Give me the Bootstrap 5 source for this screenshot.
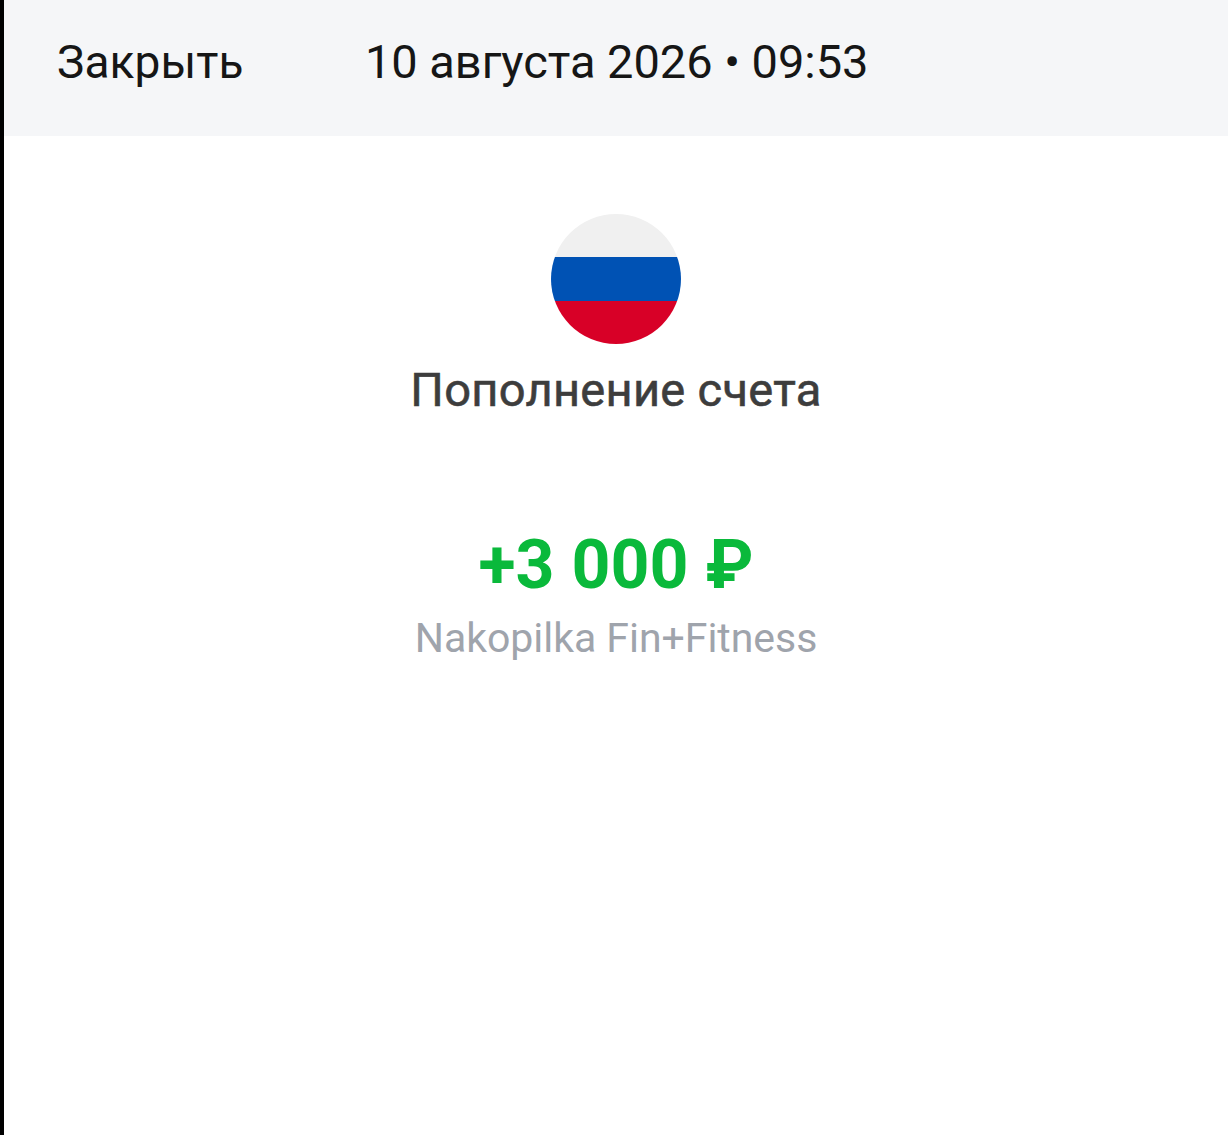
<!DOCTYPE html>
<html lang="ru"><head><meta charset="utf-8">
<link rel="stylesheet" href="https://cdn.jsdelivr.net/npm/bootstrap@5.3.0/dist/css/bootstrap.min.css">
<style>
html,body{height:100%;background:#fff;}
body{font-family:Roboto,"Noto Sans",sans-serif;}
.page-frame{height:1135px;border-left:4px solid #000;overflow:hidden;}
.top-strip{height:136px;background:#f5f6f8;color:#161616;padding-left:53px;padding-bottom:12px;}
.close-label{font-size:46px;width:308px;letter-spacing:.1px;}
.date-label{font-size:47px;letter-spacing:-.05px;}
.flag-disc{width:130px;height:130px;margin-top:78px;}
.op-title{font-size:47px;font-weight:400;color:#3d3d3d;line-height:60px;margin-top:16px;letter-spacing:.3px;-webkit-text-stroke:.6px #3d3d3d;}
.op-amount{font-size:68px;font-weight:700;color:#0ab93b;line-height:72px;margin-top:109px;}
.op-sub{font-size:41px;color:#9fa4ac;line-height:50px;margin-top:12px;letter-spacing:-.03px;}
</style></head><body>
<div class="page-frame d-flex flex-column">
<div class="top-strip d-flex align-items-center"><span class="close-label">Закрыть</span><span class="date-label">10 августа 2026 • 09:53</span></div>
<div class="d-flex flex-column align-items-center text-center">
<svg class="flag-disc" viewBox="0 0 130 130"><defs><clipPath id="c"><circle cx="65" cy="65" r="65"/></clipPath></defs><g clip-path="url(#c)"><rect width="130" height="43" fill="#f0f0f0"/><rect y="43" width="130" height="44" fill="#0052b4"/><rect y="87" width="130" height="43" fill="#d80027"/></g></svg>
<div class="op-title">Пополнение счета</div>
<div class="op-amount">+3 000 ₽</div>
<div class="op-sub">Nakopilka Fin+Fitness</div>
</div>
</div>
<script src="https://cdn.jsdelivr.net/npm/bootstrap@5.3.0/dist/js/bootstrap.bundle.min.js"></script>
</body></html>
